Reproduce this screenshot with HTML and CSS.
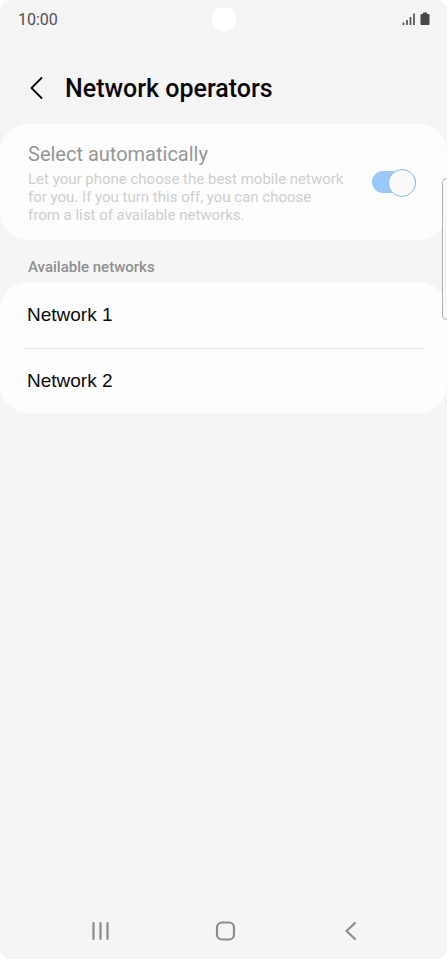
FILE: index.html
```html
<!DOCTYPE html>
<html lang="en">
<head>
<meta charset="utf-8">
<meta name="viewport" content="width=device-width, initial-scale=1">
<title>Network operators</title>
<link rel="stylesheet" href="styles.css">
</head>
<body>
<div class="screen">
  <div class="status">
    <span class="clock">10:00</span>
    <span class="camera"></span>
    <svg class="status-icons" width="28" height="16" viewBox="0 0 28 16" aria-hidden="true">
      <path d="M1.500 11.500v2.500M5 9v5M8.500 6v8M12 2.500v11.500" stroke="#505050" stroke-width="1.700" fill="none"/>
      <path d="M21 1.500h4v1.500h1.500q1 0 1 1v9q0 1-1 1h-7q-1 0-1-1v-9q0-1 1-1h1.500z" fill="#484848"/>
    </svg>
  </div>
  <header class="header">
    <button class="back" aria-label="Navigate up">
      <svg width="14" height="24" viewBox="0 0 14 24"><path d="M12.500 1 2.500 11l10 10" fill="none" stroke="#080808" stroke-width="1.800" stroke-linecap="round" stroke-linejoin="round"/></svg>
    </button>
    <h1>Network operators</h1>
  </header>
  <main>
    <section class="card auto">
      <label class="auto-text" for="auto">
        <span class="auto-title">Select automatically</span>
        <span class="auto-desc">Let your phone choose the best mobile network for you. If you turn this off, you can choose <br>from a list of available networks.</span>
      </label>
      <input class="toggle" type="checkbox" role="switch" id="auto" checked>
    </section>
    <h2>Available networks</h2>
    <section class="card list">
      <button class="network">Network 1</button>
      <button class="network">Network 2</button>
    </section>
  </main>
  <nav class="nav">
    <button aria-label="Recent apps">
      <svg width="22" height="22" viewBox="0 0 22 22"><path d="M3.500 3v16M10.500 3v16M17.500 3v16" stroke="#8c8c8c" stroke-width="2.200" stroke-linecap="round"/></svg>
    </button>
    <button aria-label="Home">
      <svg width="22" height="22" viewBox="0 0 22 22"><rect x="2" y="2.500" width="17" height="17" rx="5" fill="none" stroke="#8c8c8c" stroke-width="2.200"/></svg>
    </button>
    <button aria-label="Back">
      <svg width="22" height="22" viewBox="0 0 22 22"><path d="M16 3l-8.500 8 8.500 8" fill="none" stroke="#8c8c8c" stroke-width="2.200" stroke-linecap="round" stroke-linejoin="round"/></svg>
    </button>
  </nav>
  <div class="edge-handle"></div>
</div>
</body>
</html>
```
FILE: styles.css
```css
* {
  box-sizing: border-box;
}

body {
  margin: 0;
  background: #fff;
  font-family: Roboto, "Liberation Sans", sans-serif;
}

button {
  border: 0;
  padding: 0;
  background: none;
  font: inherit;
  color: inherit;
}

svg {
  display: block;
}

.screen {
  position: relative;
  display: flex;
  flex-direction: column;
  min-height: 100vh;
  border-radius: 10px;
  background: #f5f5f5;
  overflow: hidden;
}

.status {
  display: grid;
  grid-template-columns: 1fr 24px 1fr;
  align-items: center;
  height: 38px;
  padding: 0 17px 0 18px;
}

.clock {
  padding-top: 2px;
  font-size: 16px;
  line-height: 20px;
  color: #505050;
}

.camera {
  width: 24px;
  height: 24px;
  border-radius: 50%;
  background: #fff;
}

.status-icons {
  justify-self: end;
}

.header {
  display: flex;
  align-items: center;
  gap: 22px;
  height: 86px;
  padding: 16px 29px 0;
}

h1 {
  margin: 0;
  font-size: 25px;
  line-height: 32px;
  font-weight: 500;
  color: #080808;
}

main {
  flex: 1;
}

.card {
  border-radius: 28px;
  background: #fdfdfd;
}

.auto {
  display: flex;
  align-items: center;
  justify-content: space-between;
  gap: 20px;
  padding: 18px 31px 16px 28px;
}

.auto-text {
  display: flex;
  flex-direction: column;
  gap: 4px;
}

.auto-title {
  font-size: 20px;
  line-height: 24px;
  color: #969696;
}

.auto-desc {
  font-size: 15px;
  line-height: 18px;
  color: #cfcfcf;
}

.toggle {
  appearance: none;
  position: relative;
  flex: none;
  width: 44px;
  height: 22px;
  margin: 0 0 2px;
  border-radius: 11px;
  background: #99c9fa;
}

.toggle::before {
  content: "";
  position: absolute;
  top: -2px;
  right: 0;
  width: 26px;
  height: 26px;
  border: 1px solid #86bdf2;
  border-radius: 50%;
  background: #fafafa;
}

h2 {
  margin: 0;
  padding: 17px 28px 5px;
  font-size: 15px;
  line-height: 20px;
  font-weight: 500;
  color: #8f8f8f;
}

.list {
  display: flex;
  flex-direction: column;
  padding: 0 23px;
}

.network {
  height: 66px;
  padding: 0 4px;
  font-family: "Liberation Sans", sans-serif;
  font-size: 19px;
  line-height: 24px;
  text-align: left;
  color: #0a0a0a;
}

.network + .network {
  height: 65px;
  border-top: 1px solid #e2e2e2;
}

.nav {
  display: grid;
  grid-template-columns: repeat(3, 28%);
  justify-content: center;
  justify-items: center;
  padding: 17px 0;
  margin-left: 4px;
}

.edge-handle {
  position: absolute;
  top: 178px;
  right: -4px;
  width: 9px;
  height: 142px;
  border: 1px solid #b4b4b4;
  border-radius: 5px;
  background: #f5f5f580;
}
```
